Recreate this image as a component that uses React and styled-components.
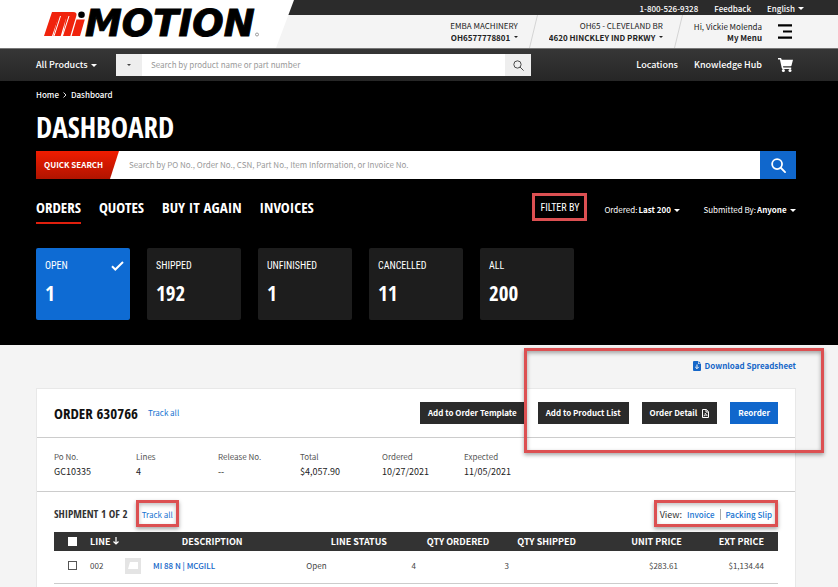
import React, { useState } from "react";
import styled, { createGlobalStyle } from "styled-components";

const TABS = ["Orders", "Quotes", "Buy it again", "Invoices"];

const STATUSES = [
  { label: "Open", count: 1 },
  { label: "Shipped", count: 192 },
  { label: "Unfinished", count: 1 },
  { label: "Cancelled", count: 11 },
  { label: "All", count: 200 },
];

const SUMMARY = [
  { label: "Po No.", value: "GC10335" },
  { label: "Lines", value: "4" },
  { label: "Release No.", value: "--" },
  { label: "Total", value: "$4,057.90" },
  { label: "Ordered", value: "10/27/2021" },
  { label: "Expected", value: "11/05/2021" },
];

const LINES = [
  {
    line: "002",
    description: "MI 88 N | MCGILL",
    status: "Open",
    ordered: 4,
    shipped: 3,
    unitPrice: "$283.61",
    extPrice: "$1,134.44",
  },
];

function Dropdown({ label, options, bold, small }) {
  return (
    <SelectWrapper $bold={bold}>
      <select aria-label={label}>
        {options.map((option) => (
          <option key={option}>{option}</option>
        ))}
      </select>
      <Caret $small={small} />
    </SelectWrapper>
  );
}

function Logo() {
  return (
    <svg width="222" height="48" viewBox="0 -4 222 48" role="img" aria-label="MiMOTION">
      <g fill="#f0230c">
        <path d="M8 8h8.300L8 32H0z" />
        <path d="M15 8h9l-7.300 24H9.300z" />
        <path d="M23 8h6q4.500 0 3.300 4l-6 20h-7.600z" />
        <path d="M32.500 15.500h8.300L36 32h-8.300z" />
      </g>
      <path d="M16.500 12 10 32M25 12l-6.500 20" stroke="#fff" strokeWidth="1" />
      <circle cx="37.500" cy="10.700" r="3.300" fill="#000" />
      <text
        x="41"
        y="32"
        fontFamily="DejaVu Sans, sans-serif"
        fontSize="37"
        fontWeight="700"
        fontStyle="italic"
        stroke="#000"
        strokeWidth="1"
      >
        MOTION
      </text>
      <circle cx="213" cy="30.500" r="1.500" fill="none" stroke="#777" strokeWidth="0.700" />
    </svg>
  );
}

function SearchIcon({ size, stroke }) {
  return (
    <svg width={size} height={size} viewBox="0 0 16 16" fill="none" stroke="currentColor" strokeWidth={stroke} aria-hidden="true">
      <circle cx="6.500" cy="6.500" r="5.300" />
      <path d="M10.400 10.400 15 15" strokeLinecap="round" />
    </svg>
  );
}

function Header() {
  return (
    <HeaderWrapper>
      <LogoLink href="#home">
        <Logo />
      </LogoLink>
      <HeaderInfo>
        <UtilityBar>
          <a href="tel:18005269328">1-800-526-9328</a>
          <a href="#feedback">Feedback</a>
          <Dropdown label="Language" options={["English"]} />
        </UtilityBar>
        <AccountBar>
          <AccountItem>
            <span>EMBA MACHINERY</span>
            <Dropdown label="Account" options={["OH6577778801"]} bold small />
          </AccountItem>
          <Slash />
          <AccountItem>
            <span>OH65 - CLEVELAND BR</span>
            <Dropdown label="Branch" options={["4620 HINCKLEY IND PRKWY"]} bold small />
          </AccountItem>
          <Slash />
          <AccountItem>
            <span>Hi, Vickie Molenda</span>
            <a href="#menu">My Menu</a>
          </AccountItem>
          <IconButton aria-label="Open menu">
            <svg width="14" height="15" viewBox="0 0 14 15" aria-hidden="true">
              <path d="M0 1.300h14M5 7.500h9M0 13.700h14" stroke="#000" strokeWidth="2.200" />
            </svg>
          </IconButton>
        </AccountBar>
      </HeaderInfo>
    </HeaderWrapper>
  );
}

function Slash() {
  return (
    <svg width="9" height="33" viewBox="0 0 9 33" aria-hidden="true">
      <path d="M8.500 0 .5 33" stroke="#d4d4d4" />
    </svg>
  );
}

function NavBar() {
  return (
    <NavWrapper>
      <MenuButton>
        All Products <Caret />
      </MenuButton>
      <NavSearch role="search">
        <NavSearchButton type="button" aria-label="Search category">
          <Caret $small />
        </NavSearchButton>
        <input aria-label="Search products" placeholder="Search by product name or part number" />
        <NavSearchButton type="button" aria-label="Search">
          <SearchIcon size={11} stroke={1.4} />
        </NavSearchButton>
      </NavSearch>
      <NavLinks>
        <a href="#locations">Locations</a>
        <a href="#hub">Knowledge Hub</a>
        <a href="#cart" aria-label="Cart">
          <svg width="15" height="14" viewBox="0 0 15 14" fill="#fff" aria-hidden="true">
            <path d="M0 0h2.600q.6 0 .8.700L3.700 1.700H15l-1.500 5.800q-.2.700-.9.700H5l.3 1.300h7.900V11H4.700q-.7 0-.9-.7L1.900 1.500H0z" />
            <circle cx="5.400" cy="12.400" r="1.500" />
            <circle cx="12" cy="12.400" r="1.500" />
          </svg>
        </a>
      </NavLinks>
    </NavWrapper>
  );
}

function Hero() {
  const [tab, setTab] = useState("Orders");
  const [status, setStatus] = useState("Open");

  return (
    <HeroWrapper>
      <Breadcrumb aria-label="Breadcrumb">
        <a href="#home">Home</a>
        <svg width="4" height="6" viewBox="0 0 4 6" fill="none" stroke="#ddd" aria-hidden="true">
          <path d="m.5.500 2.500 2.500L.5 5.500" />
        </svg>
        <a href="#dashboard">Dashboard</a>
      </Breadcrumb>
      <PageTitle>DASHBOARD</PageTitle>
      <QuickSearch role="search">
        <label htmlFor="quick-search">QUICK SEARCH</label>
        <input
          id="quick-search"
          placeholder="Search by PO No., Order No., CSN, Part No., Item Information, or Invoice No."
        />
        <button type="button" aria-label="Search orders">
          <SearchIcon size={15} stroke={1.9} />
        </button>
      </QuickSearch>
      <FilterRow>
        <Tabs>
          {TABS.map((name) => (
            <Tab key={name} $active={name === tab} onClick={() => setTab(name)}>
              {name}
            </Tab>
          ))}
        </Tabs>
        <Filters>
          <FilterTitle>FILTER BY</FilterTitle>
          <Filter>
            Ordered: <Dropdown label="Ordered" options={["Last 200"]} bold />
          </Filter>
          <Filter>
            Submitted By: <Dropdown label="Submitted by" options={["Anyone"]} bold />
          </Filter>
        </Filters>
      </FilterRow>
      <StatusCards>
        {STATUSES.map(({ label, count }) => (
          <StatusCard key={label} $active={label === status} onClick={() => setStatus(label)}>
            <span>{label}</span>
            {label === status && (
              <svg width="13" height="10" viewBox="0 0 13 10" fill="none" stroke="#fff" strokeWidth="2" aria-hidden="true">
                <path d="m1 5.300 3.300 3.200L12 1" />
              </svg>
            )}
            <strong>{count}</strong>
          </StatusCard>
        ))}
      </StatusCards>
    </HeroWrapper>
  );
}

function OrderTable() {
  return (
    <Table>
      <colgroup>
        {[36, 28, 188, 105, 93, 84, 93, 96].map((width, index) => (
          <Col key={index} $width={width} />
        ))}
      </colgroup>
      <thead>
        <tr>
          <th>
            <Checkbox type="checkbox" aria-label="Select all lines" $filled />
          </th>
          <th className="left">
            LINE
            <svg width="6" height="8" viewBox="0 0 6 8" fill="none" stroke="#fff" strokeWidth="1.200" aria-hidden="true">
              <path d="M3 0v7M.5 4.500 3 7l2.500-2.500" />
            </svg>
          </th>
          <th>DESCRIPTION</th>
          <th>LINE STATUS</th>
          <th>QTY ORDERED</th>
          <th>QTY SHIPPED</th>
          <th className="right">UNIT PRICE</th>
          <th className="right">EXT PRICE</th>
        </tr>
      </thead>
      <tbody>
        {LINES.map((item) => (
          <tr key={item.line}>
            <td className="center">
              <Checkbox type="checkbox" aria-label={`Select line ${item.line}`} />
            </td>
            <td>{item.line}</td>
            <td>
              <Product>
                <Thumbnail>
                  <svg width="10" height="7" viewBox="0 0 10 7" aria-hidden="true">
                    <path d="M2 0h8v7H0z" fill="#fff" />
                  </svg>
                </Thumbnail>
                <a href="#product">{item.description}</a>
              </Product>
            </td>
            <td>{item.status}</td>
            <td>{item.ordered}</td>
            <td>{item.shipped}</td>
            <td className="right unit">{item.unitPrice}</td>
            <td className="right">{item.extPrice}</td>
          </tr>
        ))}
      </tbody>
    </Table>
  );
}

function OrderSection() {
  return (
    <SectionWrapper>
      <Highlight />
      <DownloadLink href="#spreadsheet">
        <svg width="8" height="10" viewBox="0 0 8 10" aria-hidden="true">
          <path d="M1 0h4v3h3v6q0 1-1 1H1q-1 0-1-1V1q0-1 1-1zM5.600 0 8 2.400H5.600z" fill="currentColor" />
          <path d="M4 3.500v4M2.200 5.900 4 7.700l1.800-1.800" fill="none" stroke="#f4f4f4" />
        </svg>
        Download Spreadsheet
      </DownloadLink>
      <Card>
        <OrderHeader>
          <OrderTitle>ORDER 630766</OrderTitle>
          <TextLink href="#track">Track all</TextLink>
          <Actions>
            <ActionButton>Add to Order Template</ActionButton>
            <ActionButton>Add to Product List</ActionButton>
            <ActionButton>
              Order Detail
              <svg width="7" height="9" viewBox="0 0 7 9" fill="none" stroke="#fff" aria-hidden="true">
                <path d="M.5.500h3.800l2.200 2.200v5.800h-6zM4 .5v2.500h2.500" />
                <path d="M1.800 7q1.500-1 1.500-3 .4 2 2 2.300-2-.3-3.500.7z" strokeWidth="0.700" />
              </svg>
            </ActionButton>
            <ActionButton $primary>Reorder</ActionButton>
          </Actions>
        </OrderHeader>
        <Summary>
          {SUMMARY.map(({ label, value }) => (
            <div key={label}>
              <dt>{label}</dt>
              <dd>{value}</dd>
            </div>
          ))}
        </Summary>
        <Shipment>
          <ShipmentHeader>
            <ShipmentTitle>SHIPMENT 1 OF 2</ShipmentTitle>
            <Marked>
              <TextLink href="#track-shipment">Track all</TextLink>
            </Marked>
            <Marked $right>
              <span>View:</span>
              <TextLink href="#invoice" $strong>
                Invoice
              </TextLink>
              <Divider />
              <TextLink href="#slip" $strong>
                Packing Slip
              </TextLink>
            </Marked>
          </ShipmentHeader>
          <OrderTable />
        </Shipment>
      </Card>
    </SectionWrapper>
  );
}

export default function App() {
  return (
    <>
      <GlobalStyle />
      <Header />
      <NavBar />
      <main>
        <Hero />
        <OrderSection />
      </main>
    </>
  );
}

const GlobalStyle = createGlobalStyle`
  * {
    box-sizing: border-box;
  }

  html {
    overflow: hidden;
  }

  body {
    margin: 0;
    background: #f4f4f4;
    color: #333;
    font-family: "Noto Sans CJK JP", sans-serif;
    font-size: 8px;
    line-height: 12px;
  }

  h1, h2, h3, dl, dd {
    margin: 0;
  }

  a {
    color: inherit;
    text-decoration: none;
  }

  button, input, select {
    margin: 0;
    padding: 0;
    border: none;
    background: none;
    color: inherit;
    font: inherit;
  }

  button {
    cursor: pointer;
  }

  svg {
    display: block;
    flex: none;
  }
`;

const condensed = `"Open Sans Condensed", "Roboto Condensed", sans-serif`;
const thin = `"Roboto Condensed", "Open Sans Condensed", sans-serif`;

const Caret = styled.i`
  width: 0;
  height: 0;
  flex: none;
  border: ${({ $small }) => ($small ? 2 : 3)}px solid transparent;
  border-top-color: currentColor;
  border-bottom: none;
`;

const SelectWrapper = styled.span`
  display: inline-flex;
  align-items: center;
  gap: 3px;
  font-weight: ${({ $bold }) => ($bold ? 700 : "inherit")};

  select {
    appearance: none;
    height: 12px;
    cursor: pointer;
  }
`;

const HeaderWrapper = styled.header`
  display: flex;
  border-bottom: 1px solid #777;
  background: linear-gradient(#2b2b2b 0 15px, #f4f4f4 15px);
`;

const LogoLink = styled.a`
  width: 294px;
  flex: none;
  padding-left: 44px;
  background: #fff;
  clip-path: polygon(0 0, 100% 0, 276px 100%, 0 100%);
`;

const HeaderInfo = styled.div`
  flex: 1;
`;

const UtilityBar = styled.div`
  height: 15px;
  padding: 2px 34px 0 0;
  display: flex;
  align-items: center;
  justify-content: flex-end;
  gap: 16px;
  color: #fff;
  font-weight: 500;
`;

const AccountBar = styled.div`
  height: 33px;
  padding-right: 46px;
  display: flex;
  align-items: center;
  justify-content: flex-end;
  gap: 11px;
`;

const AccountItem = styled.div`
  display: flex;
  flex-direction: column;
  align-items: flex-end;
  line-height: 11px;
  color: #222;

  a {
    font-weight: 700;
  }
`;

const IconButton = styled.button`
  margin-left: 5px;
  display: flex;
`;

const NavWrapper = styled.nav`
  height: 32px;
  padding: 0 45px 0 36px;
  display: flex;
  align-items: center;
  background: linear-gradient(#363636, #262626);
  color: #fff;
  font-size: 9px;
  font-weight: 500;
`;

const MenuButton = styled.button`
  width: 80px;
  display: flex;
  align-items: center;
  gap: 3px;
`;

const NavSearch = styled.form`
  flex: 0 1 415px;
  height: 22px;
  display: flex;
  background: #fff;
  color: #444;
  font-size: 8px;
  font-weight: 400;

  input {
    flex: 1;
    min-width: 0;
    padding-left: 9px;
  }

  input::placeholder {
    color: #999;
  }
`;

const NavSearchButton = styled.button`
  width: 26px;
  display: flex;
  align-items: center;
  justify-content: center;
  background: #eee;
`;

const NavLinks = styled.div`
  margin-left: auto;
  display: flex;
  align-items: center;
  gap: 16px;
`;

const HeroWrapper = styled.section`
  padding: 8px 42px 25px 36px;
  background: #000;
  color: #fff;
`;

const Breadcrumb = styled.nav`
  display: flex;
  align-items: center;
  gap: 4px;
  font-weight: 500;
`;

const PageTitle = styled.h1`
  margin-top: 9px;
  font-family: ${condensed};
  font-size: 29px;
  line-height: 34px;
`;

const QuickSearch = styled.form`
  height: 28px;
  margin-top: 7px;
  display: flex;
  background: #fff;

  label {
    width: 83px;
    padding-left: 8px;
    background: linear-gradient(#f01c00, #b01400);
    clip-path: polygon(0 0, 100% 0, 74px 100%, 0 100%);
    font-weight: 700;
    line-height: 28px;
  }

  input {
    flex: 1;
    min-width: 0;
    padding-left: 10px;
    color: #333;
  }

  input::placeholder {
    color: #999;
  }

  button {
    width: 36px;
    display: flex;
    align-items: center;
    justify-content: center;
    background: #1067cc;
  }
`;

const FilterRow = styled.div`
  margin-top: 14px;
  display: flex;
  align-items: flex-start;
  justify-content: space-between;
`;

const Tabs = styled.div`
  display: flex;
  gap: 18px;
`;

const Tab = styled.button`
  height: 31px;
  padding-bottom: 1px;
  border-bottom: 2px solid ${({ $active }) => ($active ? "#e01f0d" : "transparent")};
  font-family: ${condensed};
  font-size: 15px;
  font-weight: 700;
  line-height: 28px;
  text-transform: uppercase;
`;

const Filters = styled.div`
  display: flex;
  align-items: center;
  gap: 23px;
`;

const FilterTitle = styled.span`
  height: 28px;
  margin-right: -6px;
  padding: 0 5px;
  border: 3px solid #dc5052;
  font-family: ${thin};
  font-size: 10px;
  line-height: 24px;
`;

const Filter = styled.div`
  padding-top: 6px;
  display: flex;
  align-items: center;
  gap: 1px;
`;

const StatusCards = styled.div`
  margin-top: 24px;
  display: flex;
  gap: 17px;
`;

const StatusCard = styled.button`
  flex: 0 1 94px;
  height: 72px;
  padding: 9px 6px 12px 9px;
  display: grid;
  grid-template-columns: 1fr auto;
  align-content: start;
  align-items: center;
  row-gap: 7px;
  border-radius: 2px;
  background: ${({ $active }) => ($active ? "#0e6bd3" : "#1d1d1d")};
  text-align: left;

  span {
    font-family: ${thin};
    font-size: 10px;
    line-height: 18px;
    text-transform: uppercase;
  }

  strong {
    grid-column: 1;
    font-family: ${condensed};
    font-size: 21px;
    line-height: 22px;
  }
`;

const SectionWrapper = styled.section`
  position: relative;
  padding: 15px 42px 0 36px;
  display: flex;
  flex-direction: column;
`;

const Highlight = styled.div`
  position: absolute;
  top: 3px;
  right: 14px;
  width: 300px;
  height: 105px;
  border: 3px solid #dc5052;
  box-shadow: 0 2px 4px rgba(0, 0, 0, 0.35), inset 0 2px 4px rgba(0, 0, 0, 0.35);
  pointer-events: none;
`;

const DownloadLink = styled.a`
  align-self: flex-end;
  display: flex;
  align-items: center;
  gap: 4px;
  color: #1466c8;
  font-weight: 700;
`;

const Card = styled.article`
  margin-top: 16px;
  border: 1px solid #e8e8e8;
  background: #fff;
`;

const OrderHeader = styled.div`
  height: 49px;
  padding: 0 17px;
  display: flex;
  align-items: center;
  gap: 10px;
  border-bottom: 1px solid #ccc;
`;

const OrderTitle = styled.h2`
  color: #111;
  font-family: ${condensed};
  font-size: 15px;
  line-height: 20px;
`;

const TextLink = styled.a`
  color: #1673d1;
  font-weight: ${({ $strong }) => ($strong ? 500 : 400)};
`;

const Actions = styled.div`
  margin-left: auto;
  display: flex;
  gap: 13px;
`;

const ActionButton = styled.button`
  height: 22px;
  padding: 0 8px;
  display: flex;
  align-items: center;
  gap: 5px;
  background: ${({ $primary }) => ($primary ? "#1067cc" : "#2b2b2b")};
  color: #fff;
  font-weight: 700;
`;

const Summary = styled.dl`
  height: 54px;
  padding: 13px 17px 0;
  display: flex;
  border-bottom: 1px solid #ccc;

  div {
    flex: 0 1 82px;
  }

  dt {
    color: #555;
  }

  dd {
    margin-top: 3px;
    color: #222;
    font-size: 9px;
  }
`;

const Shipment = styled.div`
  padding: 8px 17px 20px;
`;

const ShipmentHeader = styled.div`
  display: flex;
  align-items: center;
  gap: 8px;
`;

const ShipmentTitle = styled.h3`
  color: #333;
  font-family: ${condensed};
  font-size: 11px;
  line-height: 16px;
`;

const Marked = styled.div`
  height: 27px;
  margin-left: ${({ $right }) => ($right ? "auto" : 0)};
  padding: 2px 3px 0;
  display: flex;
  align-items: center;
  gap: 5px;
  border: 3px solid #dc5052;
  box-shadow: 0 2px 4px rgba(0, 0, 0, 0.35), inset 0 2px 4px rgba(0, 0, 0, 0.25);

  span {
    font-size: 9px;
  }
`;

const Divider = styled.i`
  width: 1px;
  height: 11px;
  background: #aaa;
`;

const Table = styled.table`
  width: 100%;
  margin-top: 5px;
  border-collapse: collapse;
  table-layout: fixed;

  th,
  td {
    padding: 0;
    text-align: left;
    white-space: nowrap;
  }

  th {
    height: 19px;
    background: #333;
    color: #fff;
    font-size: 9px;
    font-weight: 700;
    text-align: center;
  }

  th.left {
    text-align: left;
  }

  th svg {
    display: inline-block;
    margin-left: 2px;
  }

  td {
    height: 32px;
    padding-bottom: 2px;
    border-bottom: 1px solid #ccc;
    color: #444;
  }

  .center {
    text-align: center;
  }

  th.right,
  td.right {
    text-align: right;
  }

  td.unit {
    padding-right: 4px;
  }

  th:last-child,
  td:last-child {
    padding-right: 14px;
  }
`;

const Col = styled.col`
  width: ${({ $width }) => $width}px;
`;

const Checkbox = styled.input`
  width: 9px;
  height: 9px;
  display: block;
  margin: 0 auto;
  appearance: none;
  border: 1px solid ${({ $filled }) => ($filled ? "#fff" : "#555")};
  background: #fff;

  &:checked {
    background: #1067cc;
  }
`;

const Product = styled.div`
  padding-left: 7px;
  display: flex;
  align-items: center;
  gap: 12px;

  a {
    color: #1466c8;
    font-weight: 500;
  }
`;

const Thumbnail = styled.span`
  width: 16px;
  height: 16px;
  display: grid;
  place-items: center;
  background: #e4e4e4;
`;
